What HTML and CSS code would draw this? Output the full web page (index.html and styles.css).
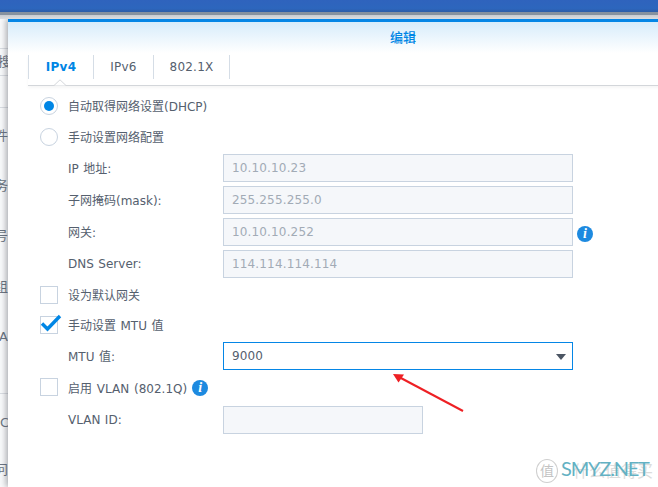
FILE: index.html
```html
<!DOCTYPE html>
<html lang="zh">
<head>
<meta charset="utf-8">
<title>编辑</title>
<link rel="stylesheet" href="styles.css">
</head>
<body>
<div class="topbar"></div>
<div class="topline"></div>
<div class="shade"></div>
<div class="desk">
  <div class="behind">
    <div class="behind-item b1">搜</div>
    <div class="behind-item b2">件</div>
    <div class="behind-item b3">务</div>
    <div class="behind-item b4">号</div>
    <div class="behind-item b5">组</div>
    <div class="behind-item b6">AP</div>
    <div class="behind-item b7">Co</div>
    <div class="behind-item b8">问</div>
    <div class="rule r1"></div>
    <div class="rule r2"></div>
    <div class="rule r3"></div>
    <div class="rule r4"></div>
  </div>
  <div class="window">
    <div class="title">编辑</div>
    <div class="tabs">
      <div class="tab active">IPv4</div>
      <div class="tab six">IPv6</div>
      <div class="tab dot1x">802.1X</div>
      <svg class="notch" width="14" height="7" viewBox="0 0 14 7"><path d="M0 6.500H1L7 .8 13 6.500H14" fill="#fff" stroke="#d3d6da"/></svg>
    </div>
    <div class="form">
      <div class="row"><span class="radio on"></span><span class="text">自动取得网络设置(DHCP)</span></div>
      <div class="row"><span class="radio"></span><span class="text">手动设置网络配置</span></div>
      <div class="row sub"><span class="label">IP 地址:</span><span class="input wide off">10.10.10.23</span></div>
      <div class="row sub g4"><span class="label">子网掩码(mask):</span><span class="input wide off">255.255.255.0</span></div>
      <div class="row sub g4"><span class="label">网关:</span><span class="input wide off">10.10.10.252</span><span class="info gate">i</span></div>
      <div class="row sub g4"><span class="label latin">DNS Server:</span><span class="input wide off">114.114.114.114</span></div>
      <div class="row"><span class="check"></span><span class="text">设为默认网关</span></div>
      <div class="row g2"><span class="check">
        <svg class="tick" width="22" height="18" viewBox="0 0 22 18"><path d="M2 9.500 7.500 15 20 2" fill="none" stroke="#0086e5" stroke-width="3.400"/></svg>
      </span><span class="text">手动设置 MTU 值</span></div>
      <div class="row sub"><span class="label">MTU 值:</span><span class="input wide focus">9000<span class="caret"></span></span></div>
      <div class="row"><span class="check"></span><span class="text vlan-text">启用 VLAN (802.1Q)</span><span class="info vlan">i</span></div>
      <div class="row sub g5"><span class="label latin">VLAN ID:</span><span class="input short off"></span></div>
    </div>
  </div>
</div>
<svg class="arrow" width="90" height="50" viewBox="0 0 90 50"><path d="M74 41 10 7" stroke="#ee2024" stroke-width="2" fill="none"/><path d="M4 4 15 4.500 9.500 12.500Z" fill="#ee2024"/></svg>
<div class="mark">
  <span class="seal">值</span>
  <span class="cn">什么值得买</span>
  <span class="net">SMYZ.NET</span>
</div>
</body>
</html>
```
FILE: styles.css
```css
* { box-sizing: border-box; }
html, body { margin: 0; height: 487px; overflow: hidden; background: #fff; }
body { font-family: "DejaVu Sans", "Noto Sans CJK SC", sans-serif; font-size: 12px; line-height: 14px; color: #55606e; position: relative; }
.topbar { height: 12px; background: linear-gradient(#2f63bd, #2d66bd 70%, #2c5da8); }
.topline { height: 3px; background: #87929f; }
.shade { height: 4px; background: linear-gradient(#c9ccd0, #dcdee1); }
.desk { height: 468px; position: relative; background: #fff; overflow: hidden; }
.behind { position: relative; height: 468px; overflow: hidden; background: #f9fafb; width: 9px; color: #6a7481; font-size: 13px; line-height: 16px; white-space: nowrap; }
.behind-item { position: absolute; width: 13px; overflow: hidden; }
.b1 { top: 35px; left: -2px; width: 10px; }
.b2 { top: 109px; left: -5px; }
.b3 { top: 159px; left: -5px; }
.b4 { top: 209px; left: -5px; }
.b5 { top: 260px; left: -5px; }
.b6 { top: 310px; left: -1px; width: 9px; }
.b7 { top: 396px; left: 0; width: 9px; }
.b8 { top: 443px; left: -5px; }
.rule { position: absolute; left: 0; width: 9px; height: 1px; background: #d9dde2; }
.r1 { top: 29px; }
.r2 { top: 56px; }
.r3 { top: 88px; }
.r4 { top: 374px; }
.window { position: absolute; left: 8px; top: 0; width: 790px; height: 468px; background: #fff; box-shadow: -2px 0 6px rgba(60,65,75,.42); border-top: 3px solid #0586e6; }
.title { height: 31px; padding-top: 9px; text-align: center; color: #0086e5; font-size: 13px; font-weight: 500; line-height: 14px; background: linear-gradient(#d7ecfb, #fff); }
.tabs { position: relative; display: flex; margin: 2px 0 0 20px; height: 31px; padding-bottom: 6px; border-bottom: 1px solid #d3d6da; box-shadow: 0 2px 3px rgba(0,0,0,.04); }
.tab { height: 24px; line-height: 24px; border-left: 1px solid #d5dde6; text-align: center; font-size: 12px; letter-spacing: .2px; color: #55606e; }
.active { width: 65px; color: #0086e5; font-weight: 700; letter-spacing: .3px; }
.six { width: 60px; }
.dot1x { width: 77px; border-right: 1px solid #d5dde6; }
.notch { position: absolute; left: 25px; top: 24px; }
.form { display: flex; flex-direction: column; gap: 3px; margin-top: 6px; padding-left: 32px; }
.row { display: flex; align-items: center; height: 28px; word-spacing: .7px; }
.row.g2 { margin-top: -1px; }
.row.g4 { margin-top: 1px; }
.row.g5 { margin-top: 2px; }
.sub { padding-left: 28px; }
.label { width: 155px; flex: none; margin-top: 2px; }
.label.latin { margin-top: 0; }
.text { margin: 2px 0 0 10px; }
.vlan-text { margin-top: 4px; word-spacing: 1px; }
.radio { width: 18px; height: 18px; border: 1px solid #c8d3e0; border-radius: 50%; background: #fff; display: flex; align-items: center; justify-content: center; }
.radio.on::after { content: ""; width: 10px; height: 10px; border-radius: 50%; background: #0086e5; }
.check { position: relative; width: 18px; height: 18px; border: 1px solid #c8d3e0; background: #fff; }
.tick { position: absolute; left: -1px; top: -3px; }
.input { display: block; height: 28px; line-height: 26px; padding-left: 8px; border: 1px solid #c8d3e0; background: #f5f7fa; color: #a2abb6; position: relative; font-size: 12px; letter-spacing: .15px; }
.input.wide { width: 350px; margin-top: 0; }
.input.short { width: 200px; }
.input.focus { border-color: #0586e6; background: #fff; color: #55606e; }
.caret { position: absolute; right: 6px; top: 11px; width: 0; height: 0; border-left: 5px solid transparent; border-right: 5px solid transparent; border-top: 6px solid #4b5563; }
.info { flex: none; display: block; width: 16px; height: 16px; border-radius: 50%; background: #1d8ae0; color: #fff; font: italic 700 14px/16px "Liberation Serif", serif; text-align: center; }
.gate { margin: 4px 0 0 4px; }
.vlan { margin: 2px 0 0 5px; }
.arrow { position: absolute; left: 389px; top: 370px; }
.mark { position: absolute; left: 535px; top: 456px; width: 123px; height: 30px; }
.seal { position: absolute; left: 1px; top: 3px; width: 22px; height: 24px; border: 1px solid #cfcfcf; border-radius: 50%; color: #c4c4c4; font-size: 14px; line-height: 22px; text-align: center; }
.cn { position: absolute; left: 38px; top: 6px; color: #dcdcdc; font-size: 16px; line-height: 20px; white-space: nowrap; }
.net { position: absolute; left: 26px; top: 0; color: #63b1c3; font: 20px/24px "Lato", sans-serif; letter-spacing: -1.2px; white-space: nowrap; }
```
